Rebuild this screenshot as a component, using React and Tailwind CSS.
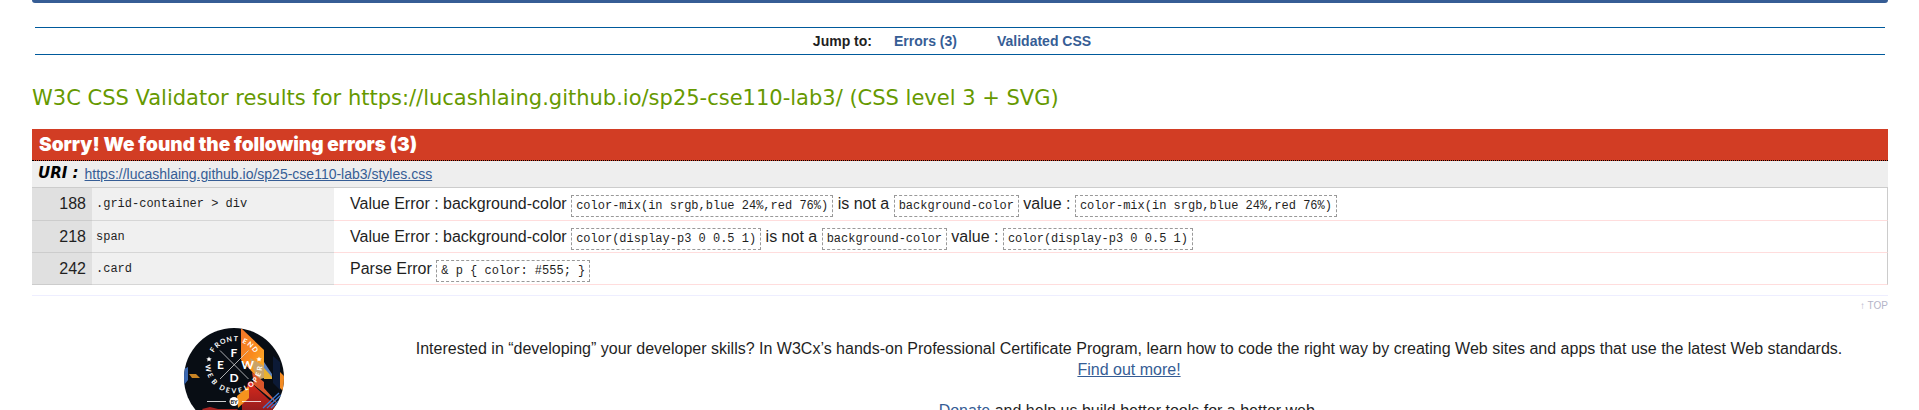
const ERRORS = [
  {
    line: 188,
    context: '.grid-container > div',
    message: [
      'Value Error : background-color ',
      { code: 'color-mix(in srgb,blue 24%,red 76%)' },
      ' is not a ',
      { code: 'background-color' },
      ' value : ',
      { code: 'color-mix(in srgb,blue 24%,red 76%)' },
    ],
  },
  {
    line: 218,
    context: 'span',
    message: [
      'Value Error : background-color ',
      { code: 'color(display-p3 0 0.5 1)' },
      ' is not a ',
      { code: 'background-color' },
      ' value : ',
      { code: 'color(display-p3 0 0.5 1)' },
    ],
  },
  {
    line: 242,
    context: '.card',
    message: ['Parse Error ', { code: '& p { color: #555; }' }],
  },
];

function JumpBar() {
  return (
    <nav className="mr-[3px] ml-[3px] mt-6 flex h-7 items-center justify-center border-y border-[#005a9c] pr-4 text-sm font-bold">
      <span className="mr-[22px]">Jump to:</span>
      <a href="#errors" className="mr-10 text-[#365d95]">Errors (3)</a>
      <a href="#css" className="text-[#365d95]">Validated CSS</a>
    </nav>
  );
}

function ErrorRow({ line, context, message }) {
  return (
    <tr className="h-8 first:h-[33px]">
      <td className="w-[60px] border-b border-[#ccc] bg-[#e0e0e0] pr-1.5 text-right">{line}</td>
      <td className="w-[242px] border-b border-[#d6d6d6] bg-[#f0f0f0] pl-1 font-['Liberation_Mono',monospace] text-xs">
        {context}
      </td>
      <td className="border-r border-b border-r-[#ccc] border-b-[#fdd] pl-4">
        {message.map((part, i) =>
          typeof part === 'string' ? (
            part
          ) : (
            <code
              key={i}
              className="border border-dashed border-[#999] px-1 py-[3px] font-['Liberation_Mono',monospace] text-xs"
            >
              {part.code}
            </code>
          )
        )}
      </td>
    </tr>
  );
}

// Sets a word around the badge's ring; angles are degrees clockwise from twelve o'clock.
function RingWord({ word, from, step, inward = false }) {
  const radius = inward ? 28.5 : 23.5;
  const advances = { W: 7.2, O: 5.8, N: 5.4, D: 5.4, R: 4.6, F: 4, E: 4.2, L: 3.7, T: 4.2, V: 5, B: 4.6, P: 4.4 };
  const glyphs = [...word].map((letter, i) => {
    const angle = from + i * step;
    const turn = inward ? angle + 180 : angle;
    const a = (angle * Math.PI) / 180;
    const t = (turn * Math.PI) / 180;
    const half = advances[letter] / 2;
    return {
      x: 50 + radius * Math.sin(a) - half * Math.cos(t),
      y: 36.7 - radius * Math.cos(a) - half * Math.sin(t),
      turn,
    };
  });
  return (
    <text
      x={glyphs.map((g) => g.x.toFixed(2)).join(' ')}
      y={glyphs.map((g) => g.y.toFixed(2)).join(' ')}
      rotate={glyphs.map((g) => g.turn.toFixed(1)).join(' ')}
      fontSize="7"
    >
      {word}
    </text>
  );
}

function Badge() {
  return (
    <svg viewBox="0 0 100 100" className="size-[100px]" role="img" aria-label="Front End Web Developer by W3Cx">
      <defs>
        <clipPath id="disc">
          <circle cx="50" cy="50" r="50" />
        </clipPath>
        <linearGradient id="flame" x1="0" y1="0" x2="1" y2="1">
          <stop offset="0" stopColor="#f0752a" />
          <stop offset="0.5" stopColor="#f98a1e" />
          <stop offset="1" stopColor="#fdb62b" />
        </linearGradient>
        <linearGradient id="ember" x1="0" y1="0" x2="0" y2="1">
          <stop offset="0" stopColor="#d92a1c" />
          <stop offset="1" stopColor="#6d1420" />
        </linearGradient>
      </defs>
      <g clipPath="url(#disc)">
        <rect width="100" height="100" fill="#080d14" />
        <path d="M57 0 L80 22 V50 L74 50 L57 32 Z" fill="url(#flame)" />
        <path d="M66 30 L80 38 V50 L73 52 Z" fill="#c9a36a" />
        <path d="M80 34 L88 46 V51 H80 Z" fill="#5f83bd" />
        <path d="M80 40 L88 49 V51 H80 Z" fill="#e8b030" />
        <path d="M68 44 L80 54 V60 L96 78 L70 57 Z" fill="#d9562b" />
        <path d="M89 28 L96 34 V62 L89 55 Z" fill="#0c1a36" />
        <path d="M96 44 L100 48 V64 L96 60 Z" fill="#f28a22" />
        <path d="M0 41 L4 39 V52 L0 57 Z" fill="#3a67b0" />
        <path d="M5 46 L12 46 L16 50 L8 50 Z" fill="#c98424" />
        <path d="M66 54 L94 80 L80 100 H58 V66 Z" fill="url(#ember)" />
        <path d="M53 68 L65 58 V70 L54 80 Z" fill="#f5921e" />
        <path d="M18 81 L26 79 L34 81 H54 L48 88 H24 Z" fill="#a82422" />
        <path d="M79 80 L95 65 M83 80 L97 67 M87 80 L98 70" stroke="#3f78d0" strokeWidth="1.3" />
        <path d="M36 22.5 L64.5 51 M64.5 22.5 L36 51" stroke="#d8d8d8" strokeWidth="0.8" />
        <path d="M23 73.5 H42 M58 73.5 H77" stroke="#fff" strokeWidth="0.8" />
        <circle cx="66.5" cy="56.5" r="3" fill="#e5342b" />
        <g fill="#fff" fontFamily="Lato, sans-serif" fontWeight="700">
          <g fontSize="12" textAnchor="middle">
            <text x="50" y="28.5">F</text>
            <text x="36.5" y="41">E</text>
            <text x="63.5" y="41">W</text>
            <text x="50" y="54">D</text>
          </g>
          <RingWord word="FRONT" from={-55} step={14.7} />
          <RingWord word="END" from={25} step={14.5} />
          <RingWord word="WEB" from={-98} step={-16.5} inward />
          <RingWord word="DEVELOPER" from={-153} step={-13.6} inward />
          <path d="M25 28.5l.8 1.7 1.9.2-1.4 1.3.4 1.8-1.7-.9-1.7.9.4-1.8-1.4-1.3 1.9-.2z" />
          <path d="M75 28.5l.8 1.7 1.9.2-1.4 1.3.4 1.8-1.7-.9-1.7.9.4-1.8-1.4-1.3 1.9-.2z" />
        </g>
        <circle cx="50" cy="73.5" r="4.5" fill="#fff" />
        <text x="50" y="75.5" fontSize="5.5" fontWeight="700" fontFamily="Lato, sans-serif" textAnchor="middle" fill="#111">
          BY
        </text>
      </g>
    </svg>
  );
}

export default function App() {
  return (
    <div className="h-screen overflow-hidden bg-white pr-[31px] pl-8 font-['Liberation_Sans',Arial,sans-serif] text-base text-[#1f1f1f]">
      <header className="h-[3px] rounded-b-sm bg-[#365d95]" />
      <JumpBar />
      <main>
        <h2 className="mt-[29px] font-['DejaVu_Sans',Verdana,sans-serif] text-[21px] leading-7 text-[#690]">
          W3C CSS Validator results for https://lucashlaing.github.io/sp25-cse110-lab3/ (CSS level 3 + SVG)
        </h2>
        <section id="errors" className="mt-[17px]">
          <h3 className="border-b border-dotted border-black bg-[#d23d24] pl-[7px] font-['Inter',sans-serif] text-[19px] leading-[31px] font-black text-white">
            Sorry! We found the following errors (3)
          </h3>
          <h4 className="flex h-[27px] items-center gap-1.5 border-b border-[#ccc] bg-[#eee] pl-1.5 text-sm">
            <span className="font-['DejaVu_Sans',Verdana,sans-serif] text-[15px] font-bold text-black italic">URI :</span>
            <a href="#uri" className="text-[#365d95] underline">
              https://lucashlaing.github.io/sp25-cse110-lab3/styles.css
            </a>
          </h4>
          <table className="w-full table-fixed border-separate border-spacing-0">
            <tbody>
              {ERRORS.map((error) => (
                <ErrorRow key={error.line} {...error} />
              ))}
            </tbody>
          </table>
        </section>
        <div className="mt-2.5 border-t border-[#eef] pt-1 text-right text-[10px] leading-3">
          <a href="#top" className="text-[#b4b4c8]">↑ TOP</a>
        </div>
      </main>
      <footer className="mt-4 flex">
        <div className="flex w-[338px] shrink-0 pl-[152px]">
          <Badge />
        </div>
        <div className="flex-1 pt-2.5 text-center leading-[21px]">
          <p>
            Interested in “developing” your developer skills? In W3Cx’s hands-on Professional Certificate Program, learn
            how to code the right way by creating Web sites and apps that use the latest Web standards.
            <br />
            <a href="#more" className="text-[#365d95] underline">Find out more!</a>
          </p>
          <p className="mt-5">
            <a href="#donate" className="text-[#365d95] underline">Donate</a> and help us build better tools for a better
            web.
          </p>
        </div>
      </footer>
    </div>
  );
}
